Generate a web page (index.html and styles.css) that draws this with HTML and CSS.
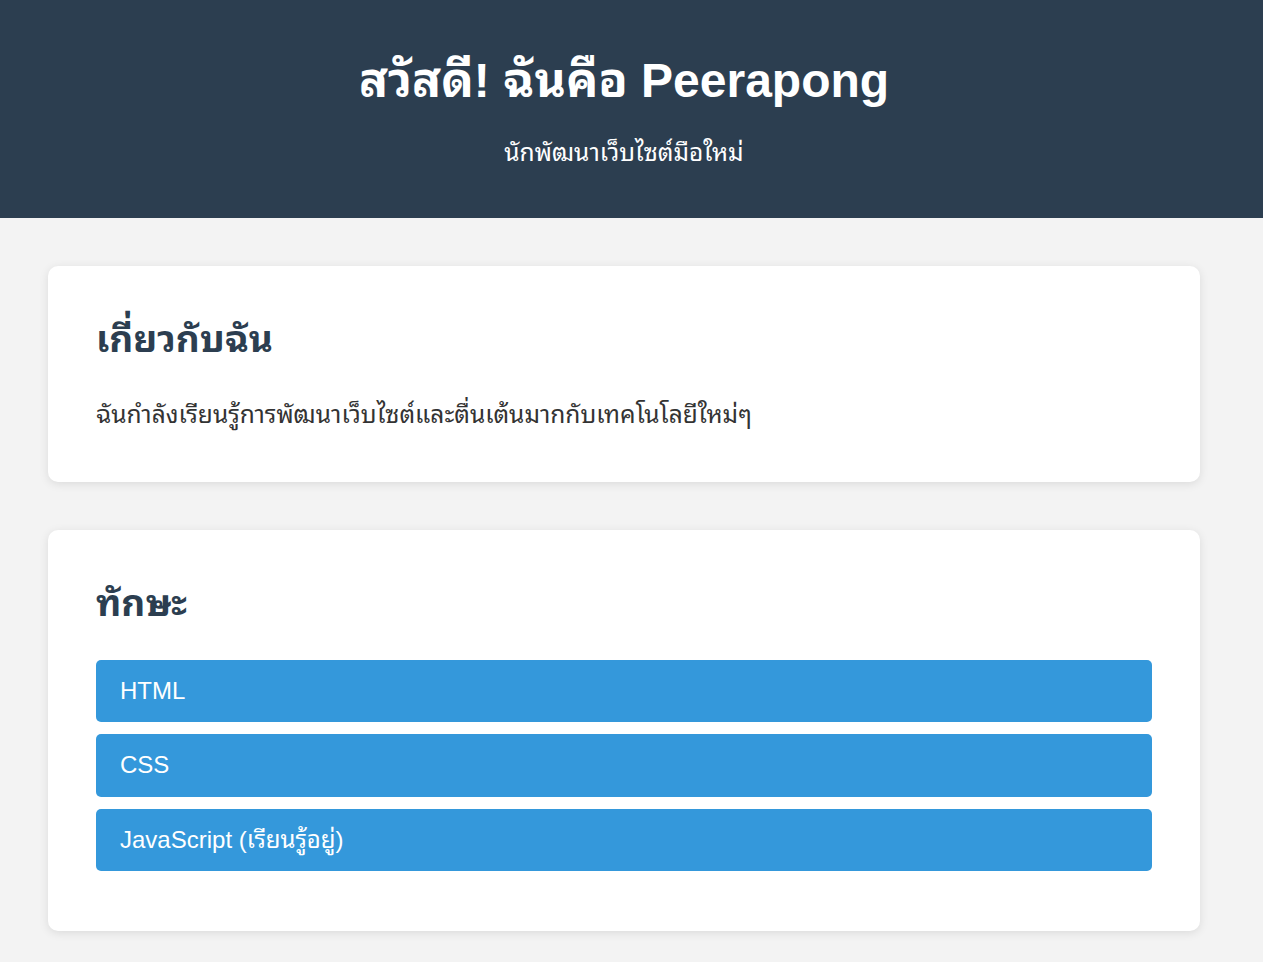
FILE: index.html
```html
<!DOCTYPE html>
<html lang="th">
<head>
  <meta charset="UTF-8">
  <meta name="viewport" content="width=device-width, initial-scale=1.0">
  <title>Peerapong</title>
  <link rel="stylesheet" href="styles.css">
</head>
<body>
  <header class="site-header">
    <div class="header-inner">
      <h1>สวัสดี! ฉันคือ Peerapong</h1>
      <p class="tagline">นักพัฒนาเว็บไซต์มือใหม่</p>
    </div>
  </header>

  <main class="page">
    <section class="card">
      <h2>เกี่ยวกับฉัน</h2>
      <p>ฉันกำลังเรียนรู้การพัฒนาเว็บไซต์และตื่นเต้นมากกับเทคโนโลยีใหม่ๆ</p>
    </section>

    <section class="card">
      <h2>ทักษะ</h2>
      <ul class="skills">
        <li>HTML</li>
        <li>CSS</li>
        <li>JavaScript (เรียนรู้อยู่)</li>
      </ul>
    </section>
  </main>
</body>
</html>
```

FILE: styles.css
```css
body {
  font-family: 'Liberation Sans', 'Noto Sans Thai Looped', Loma, Garuda, 'Tlwg Typo', Tahoma, sans-serif;
  font-size: 24px;
  line-height: 1.6;
  margin: 0;
  background-color: #f3f3f3;
  color: #333;
}

/* header */
.site-header {
  background-color: #2c3e50;
  color: white;
}

.header-inner {
  max-width: 1248px;
  padding: 43px 0 47px;
  text-align: center;
}

.site-header h1 {
  font-size: 48px;
  line-height: 1.6;
  margin: 0 0 14px;
}

.tagline {
  font-size: 24.5px;
  margin: 0;
  line-height: 37px;
}

/* content */
.page {
  max-width: 1248px;
  box-sizing: border-box;
  padding: 48px;
}

.card {
  background-color: white;
  padding: 48px;
  border-radius: 10px;
  box-shadow: 0 2px 10px rgba(0, 0, 0, 0.1);
  margin-bottom: 48px;
}

.card h2 {
  color: #2c3e50;
  font-size: 37px;
  line-height: 52px;
  margin: 0 0 30px;
}

.card p {
  font-size: 24.5px;
  line-height: 38px;
  margin: 0;
}

.skills {
  list-style-type: none;
  padding: 0;
  margin: 0;
}

.skills li {
  background-color: #3498db;
  color: white;
  padding: 12px 24px;
  border-radius: 5px;
  margin-bottom: 12px;
}
```
